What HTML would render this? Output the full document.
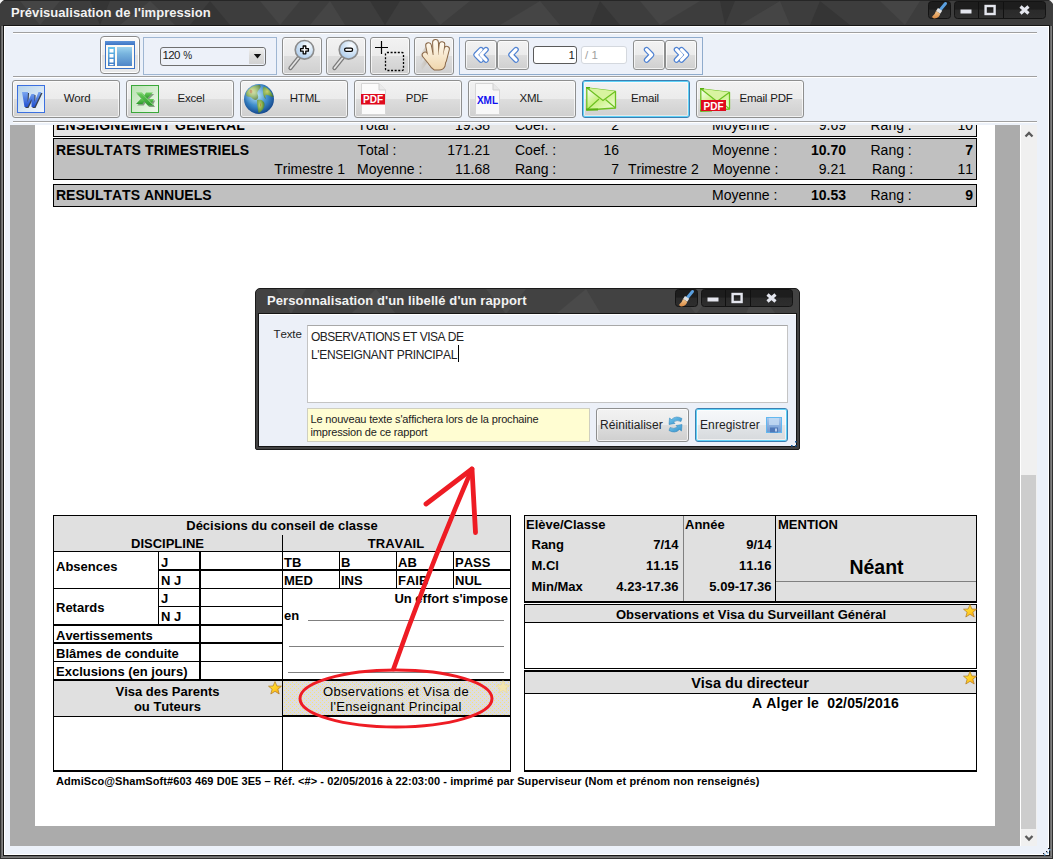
<!DOCTYPE html><html><head><meta charset="utf-8"><style>
*{margin:0;padding:0;box-sizing:border-box}
html,body{width:1053px;height:859px;overflow:hidden;background:#2e2e2e;font-family:"Liberation Sans",sans-serif}
.a{position:absolute}
.tx{white-space:pre;font-kerning:none}
.btn{position:absolute;border:1px solid #8e8f8f;border-radius:3px;background:linear-gradient(#f2f2f2 0%,#ebebeb 50%,#dddddd 51%,#cfcfcf 100%);box-shadow:inset 0 0 0 1px rgba(255,255,255,0.7)}
</style></head><body>
<div class="a" style="left:0px;top:0px;width:1053px;height:859px;background:#303030;"></div>
<svg class="a" style="left:0;top:0" width="1053" height="26">
<rect x="0" y="0" width="1053" height="26" fill="#3d3d3d"/>
<g fill="#454545">
<polygon points="20,1 60,1 40,25"/><polygon points="150,1 175,25 120,25"/><polygon points="260,1 300,1 280,25"/>
<polygon points="330,1 345,25 310,25"/><polygon points="420,1 470,1 440,25"/><polygon points="540,1 560,25 500,25"/>
<polygon points="640,1 700,1 660,25"/><polygon points="780,1 790,25 740,25"/><polygon points="880,1 920,1 905,25"/>
</g>
<g fill="#353535">
<polygon points="90,1 110,1 100,25"/><polygon points="210,1 230,25 190,25"/><polygon points="370,1 400,1 385,25"/>
<polygon points="600,1 620,25 590,25"/><polygon points="720,1 735,1 725,25"/><polygon points="820,1 850,25 810,25"/>
</g>
<rect x="0" y="0" width="1053" height="1" fill="#262626"/>
</svg>
<svg class="a" style="left:0;top:0" width="1053" height="6"><path d="M0,0 L4,0 L2.5,1 L1,2.5 L0,4 Z" fill="#f4f4f4"/><path d="M1053,0 L1049,0 L1050.5,1 L1052,2.5 L1053,4 Z" fill="#f4f4f4"/></svg>
<div class="a tx" style="font-size:13px;line-height:13px;color:#f2f2f2;font-weight:bold;letter-spacing:0.05px;left:11px;top:6.00px;">Prévisualisation de l&#x27;impression</div>
<svg class="a" style="left:928px;top:1px" width="120" height="19">
<defs><linearGradient id="tbg928" x1="0" y1="0" x2="0" y2="1"><stop offset="0" stop-color="#1d1d1d"/><stop offset="0.45" stop-color="#1d1d1d"/><stop offset="0.5" stop-color="#2a2a2a"/><stop offset="1" stop-color="#2e2e2e"/></linearGradient>
<linearGradient id="brg928" x1="0" y1="0" x2="0" y2="1"><stop offset="0" stop-color="#f4c890"/><stop offset="1" stop-color="#d88840"/></linearGradient></defs>
<rect x="0.5" y="0.5" width="22" height="17" rx="3" fill="url(#tbg928)" stroke="#141414"/>
<rect x="26.5" y="0.5" width="91" height="17" rx="3" fill="url(#tbg928)" stroke="#141414"/>
<line x1="50.5" y1="1" x2="50.5" y2="17" stroke="#111"/>
<line x1="75.5" y1="1" x2="75.5" y2="17" stroke="#111"/>
<line x1="17.5" y1="2.5" x2="12.5" y2="8.5" stroke="#5aa0e0" stroke-width="3" stroke-linecap="round"/>
<path d="M10,7 L14.2,9.8 L12.2,12.8 L8,10 Z" fill="#e0e0e0"/>
<path d="M8,10 L12.2,12.8 Q11.5,17 6.5,17.5 Q4,17.5 4.2,15.5 Q7,13.5 8,10 Z" fill="url(#brg928)"/>
<rect x="32.5" y="8.5" width="11" height="4" fill="#e4e6ee"/>
<rect x="57.6" y="5" width="9" height="8" fill="none" stroke="#e4e6ee" stroke-width="2.4"/>
<path d="M92.5,5.5 L100.5,12.5 M100.5,5.5 L92.5,12.5" stroke="#e4e6ee" stroke-width="3.2"/>
</svg>
<div class="a" style="left:1px;top:26px;width:2px;height:832px;background:#6a6a6a;"></div>
<div class="a" style="left:2px;top:26px;width:1px;height:832px;background:#808080;"></div>
<div class="a" style="left:1050px;top:26px;width:2px;height:832px;background:#6a6a6a;"></div>
<div class="a" style="left:1051px;top:26px;width:1px;height:832px;background:#808080;"></div>
<div class="a" style="left:1px;top:856px;width:1051px;height:2px;background:#6a6a6a;"></div>
<div class="a" style="left:1px;top:857px;width:1051px;height:1px;background:#7a7a7a;"></div>
<div class="a" style="left:3px;top:25px;width:1047px;height:831px;background:#151515;"></div>
<div class="a" style="left:4px;top:26px;width:1045px;height:829px;background:#ffffff;"></div>
<div class="a" style="left:5px;top:27px;width:1043px;height:827px;background:#ecf1f9;"></div>
<svg class="a" style="left:1040px;top:845px" width="12" height="12">
<g fill="#7ab0e0"><rect x="9" y="4" width="1.5" height="1.5"/><rect x="7" y="7" width="1.5" height="1.5"/><rect x="4" y="9" width="1.5" height="1.5"/></g>
<g fill="#101828"><rect x="8" y="3" width="1.2" height="1.2"/><rect x="6" y="6" width="1.2" height="1.2"/><rect x="3" y="8" width="1.2" height="1.2"/></g>
</svg>
<div class="a" style="left:13px;top:32px;width:1024px;height:1px;background:#a0a0a0;"></div>
<div class="a" style="left:13px;top:33px;width:1024px;height:1px;background:#ffffff;"></div>
<div class="a" style="left:13px;top:76px;width:1024px;height:1px;background:#a0a0a0;"></div>
<div class="a" style="left:13px;top:77px;width:1024px;height:1px;background:#ffffff;"></div>
<div class="a" style="left:13px;top:121px;width:1024px;height:1px;background:#a0a0a0;"></div>
<div class="a" style="left:13px;top:122px;width:1024px;height:1px;background:#ffffff;"></div>
<div class="a" style="left:10px;top:125px;width:1010px;height:721px;background:#ababab;"></div>
<div class="a" style="left:35px;top:125px;width:960px;height:701px;background:#ffffff;"></div>
<div class="a" style="left:1020px;top:125px;width:1px;height:721px;background:#ffffff;"></div>
<div class="a" style="left:1021px;top:125px;width:16px;height:721px;background:#f0f0f0;"></div>
<div class="a" style="left:1021px;top:475px;width:15px;height:354px;background:#cdcdcd;"></div>
<svg class="a" style="left:1021px;top:125px" width="16" height="721">
<path d="M4.5,11.5 L8,8 L11.5,11.5" fill="none" stroke="#5a5a5a" stroke-width="2.3"/>
<path d="M4.5,711 L8,714.5 L11.5,711" fill="none" stroke="#5a5a5a" stroke-width="2.3"/>
</svg>
<div class="a" style="left:35px;top:125px;width:960px;height:701px;overflow:hidden"><div class="a" style="left:-35px;top:-125px;width:1053px;height:859px">
<div class="a" style="left:53px;top:100px;width:924px;height:37px;background:#e4e4e4;border:1px solid #000;"></div>
<div class="a tx" style="font-size:14px;line-height:14px;color:#000;font-weight:bold;letter-spacing:0.24px;left:56px;top:118.15px;">ENSEIGNEMENT GENERAL</div>
<div class="a tx" style="font-size:14px;line-height:14px;color:#000;left:357.5px;top:118.15px;">Total :</div>
<div class="a tx" style="font-size:14px;line-height:14px;color:#000;left:-110px;width:600px;text-align:right;top:118.15px;">19.38</div>
<div class="a tx" style="font-size:14px;line-height:14px;color:#000;left:515px;top:118.15px;">Coef. :</div>
<div class="a tx" style="font-size:14px;line-height:14px;color:#000;left:19px;width:600px;text-align:right;top:118.15px;">2</div>
<div class="a tx" style="font-size:14px;line-height:14px;color:#000;left:712px;top:118.15px;">Moyenne :</div>
<div class="a tx" style="font-size:14px;line-height:14px;color:#000;left:246px;width:600px;text-align:right;top:118.15px;">9.69</div>
<div class="a tx" style="font-size:14px;line-height:14px;color:#000;left:870.5px;top:118.15px;">Rang :</div>
<div class="a tx" style="font-size:14px;line-height:14px;color:#000;left:373px;width:600px;text-align:right;top:118.15px;">10</div>
<div class="a" style="left:53px;top:138px;width:924px;height:42px;background:#c0c0c0;border:1px solid #000;"></div>
<div class="a tx" style="font-size:14px;line-height:14px;color:#000;font-weight:bold;letter-spacing:0.12px;left:56px;top:143.15px;">RESULTATS TRIMESTRIELS</div>
<div class="a tx" style="font-size:14px;line-height:14px;color:#000;left:357.5px;top:143.15px;">Total :</div>
<div class="a tx" style="font-size:14px;line-height:14px;color:#000;left:-110px;width:600px;text-align:right;top:143.15px;">171.21</div>
<div class="a tx" style="font-size:14px;line-height:14px;color:#000;left:515px;top:143.15px;">Coef. :</div>
<div class="a tx" style="font-size:14px;line-height:14px;color:#000;left:19px;width:600px;text-align:right;top:143.15px;">16</div>
<div class="a tx" style="font-size:14px;line-height:14px;color:#000;left:712px;top:143.15px;">Moyenne :</div>
<div class="a tx" style="font-size:14px;line-height:14px;color:#000;font-weight:bold;left:246px;width:600px;text-align:right;top:143.15px;">10.70</div>
<div class="a tx" style="font-size:14px;line-height:14px;color:#000;left:870.5px;top:143.15px;">Rang :</div>
<div class="a tx" style="font-size:14px;line-height:14px;color:#000;font-weight:bold;left:373px;width:600px;text-align:right;top:143.15px;">7</div>
<div class="a tx" style="font-size:14px;line-height:14px;color:#000;left:-255px;width:600px;text-align:right;top:161.65px;">Trimestre 1</div>
<div class="a tx" style="font-size:14px;line-height:14px;color:#000;left:357px;top:161.65px;">Moyenne :</div>
<div class="a tx" style="font-size:14px;line-height:14px;color:#000;left:-110px;width:600px;text-align:right;top:161.65px;">11.68</div>
<div class="a tx" style="font-size:14px;line-height:14px;color:#000;left:515px;top:161.65px;">Rang :</div>
<div class="a tx" style="font-size:14px;line-height:14px;color:#000;left:19px;width:600px;text-align:right;top:161.65px;">7</div>
<div class="a tx" style="font-size:14px;line-height:14px;color:#000;left:628px;top:161.65px;">Trimestre 2</div>
<div class="a tx" style="font-size:14px;line-height:14px;color:#000;left:713px;top:161.65px;">Moyenne :</div>
<div class="a tx" style="font-size:14px;line-height:14px;color:#000;left:246px;width:600px;text-align:right;top:161.65px;">9.21</div>
<div class="a tx" style="font-size:14px;line-height:14px;color:#000;left:872px;top:161.65px;">Rang :</div>
<div class="a tx" style="font-size:14px;line-height:14px;color:#000;left:373px;width:600px;text-align:right;top:161.65px;">11</div>
<div class="a" style="left:53px;top:184px;width:924px;height:23px;background:#c0c0c0;border:1px solid #000;"></div>
<div class="a tx" style="font-size:14px;line-height:14px;color:#000;font-weight:bold;left:56px;top:188.15px;">RESULTATS ANNUELS</div>
<div class="a tx" style="font-size:14px;line-height:14px;color:#000;left:712px;top:188.15px;">Moyenne :</div>
<div class="a tx" style="font-size:14px;line-height:14px;color:#000;font-weight:bold;left:246px;width:600px;text-align:right;top:188.15px;">10.53</div>
<div class="a tx" style="font-size:14px;line-height:14px;color:#000;left:870.5px;top:188.15px;">Rang :</div>
<div class="a tx" style="font-size:14px;line-height:14px;color:#000;font-weight:bold;left:373px;width:600px;text-align:right;top:188.15px;">9</div>
<div class="a" style="left:54px;top:516px;width:456px;height:35px;background:#e0e0e0;"></div>
<div class="a" style="left:54px;top:681px;width:228px;height:35px;background:#e0e0e0;"></div>
<svg class="a" style="left:283px;top:681px" width="227" height="34"><defs><pattern id="dp" width="4" height="4" patternUnits="userSpaceOnUse"><rect width="4" height="4" fill="#dddde0"/><rect x="1" y="1" width="1" height="1" fill="#f7e47c"/><rect x="3" y="3" width="1" height="1" fill="#f7e47c"/></pattern></defs><rect width="227" height="34" fill="url(#dp)"/></svg>
<div class="a" style="left:53px;top:515px;width:458px;height:1px;background:#000;"></div>
<div class="a" style="left:53px;top:515px;width:1px;height:257px;background:#000;"></div>
<div class="a" style="left:510px;top:515px;width:1px;height:257px;background:#000;"></div>
<div class="a" style="left:53px;top:770px;width:458px;height:2px;background:#000;"></div>
<div class="a" style="left:53px;top:551px;width:458px;height:1px;background:#000;"></div>
<div class="a" style="left:282px;top:535px;width:1px;height:235px;background:#000;"></div>
<div class="a" style="left:158px;top:569px;width:352px;height:2px;background:#000;"></div>
<div class="a" style="left:53px;top:588px;width:458px;height:1px;background:#000;"></div>
<div class="a" style="left:158px;top:606px;width:124px;height:1px;background:#000;"></div>
<div class="a" style="left:53px;top:624px;width:229px;height:2px;background:#000;"></div>
<div class="a" style="left:53px;top:642px;width:229px;height:2px;background:#000;"></div>
<div class="a" style="left:53px;top:661px;width:229px;height:1px;background:#000;"></div>
<div class="a" style="left:53px;top:679px;width:458px;height:2px;background:#000;"></div>
<div class="a" style="left:53px;top:716px;width:229px;height:1px;background:#000;"></div>
<div class="a" style="left:282px;top:715px;width:229px;height:2px;background:#000;"></div>
<div class="a" style="left:158px;top:551px;width:1px;height:74px;background:#000;"></div>
<div class="a" style="left:199px;top:551px;width:2px;height:129px;background:#000;"></div>
<div class="a" style="left:339px;top:551px;width:1px;height:38px;background:#000;"></div>
<div class="a" style="left:396px;top:551px;width:1px;height:38px;background:#000;"></div>
<div class="a" style="left:453px;top:551px;width:1px;height:38px;background:#000;"></div>
<div class="a" style="left:308px;top:620px;width:196px;height:1px;background:#808080;"></div>
<div class="a" style="left:289px;top:646px;width:215px;height:1px;background:#808080;"></div>
<div class="a" style="left:288px;top:672px;width:216px;height:1px;background:#808080;"></div>
<div class="a tx" style="font-size:13px;line-height:13px;color:#000;font-weight:bold;left:-18px;width:600px;text-align:center;top:519.00px;">Décisions du conseil de classe</div>
<div class="a tx" style="font-size:13px;line-height:13px;color:#000;font-weight:bold;left:-132.5px;width:600px;text-align:center;top:537.00px;">DISCIPLINE</div>
<div class="a tx" style="font-size:13px;line-height:13px;color:#000;font-weight:bold;left:96px;width:600px;text-align:center;top:537.00px;">TRAVAIL</div>
<div class="a tx" style="font-size:13px;line-height:13px;color:#000;font-weight:bold;left:56px;top:560.00px;">Absences</div>
<div class="a tx" style="font-size:13px;line-height:13px;color:#000;font-weight:bold;left:161px;top:556.00px;">J</div>
<div class="a tx" style="font-size:13px;line-height:13px;color:#000;font-weight:bold;left:161px;top:574.00px;">N J</div>
<div class="a tx" style="font-size:13px;line-height:13px;color:#000;font-weight:bold;left:56px;top:601.00px;">Retards</div>
<div class="a tx" style="font-size:13px;line-height:13px;color:#000;font-weight:bold;left:161px;top:592.00px;">J</div>
<div class="a tx" style="font-size:13px;line-height:13px;color:#000;font-weight:bold;left:161px;top:610.00px;">N J</div>
<div class="a tx" style="font-size:13px;line-height:13px;color:#000;font-weight:bold;left:56px;top:628.50px;">Avertissements</div>
<div class="a tx" style="font-size:13px;line-height:13px;color:#000;font-weight:bold;left:56px;top:647.00px;">Blâmes de conduite</div>
<div class="a tx" style="font-size:13px;line-height:13px;color:#000;font-weight:bold;left:56px;top:665.00px;">Exclusions (en jours)</div>
<div class="a tx" style="font-size:13px;line-height:13px;color:#000;font-weight:bold;left:284px;top:556.00px;">TB</div>
<div class="a tx" style="font-size:13px;line-height:13px;color:#000;font-weight:bold;left:341px;top:556.00px;">B</div>
<div class="a tx" style="font-size:13px;line-height:13px;color:#000;font-weight:bold;left:398px;top:556.00px;">AB</div>
<div class="a tx" style="font-size:13px;line-height:13px;color:#000;font-weight:bold;left:455px;top:556.00px;">PASS</div>
<div class="a tx" style="font-size:13px;line-height:13px;color:#000;font-weight:bold;left:284px;top:574.00px;">MED</div>
<div class="a tx" style="font-size:13px;line-height:13px;color:#000;font-weight:bold;left:341px;top:574.00px;">INS</div>
<div class="a tx" style="font-size:13px;line-height:13px;color:#000;font-weight:bold;left:398px;top:574.00px;">FAIB</div>
<div class="a tx" style="font-size:13px;line-height:13px;color:#000;font-weight:bold;left:455px;top:574.00px;">NUL</div>
<div class="a tx" style="font-size:13px;line-height:13px;color:#000;font-weight:bold;left:-92px;width:600px;text-align:right;top:592.00px;">Un effort s&#x27;impose</div>
<div class="a tx" style="font-size:13px;line-height:13px;color:#000;font-weight:bold;left:284px;top:609.00px;">en</div>
<div class="a tx" style="font-size:13px;line-height:13px;color:#000;font-weight:bold;left:-132.5px;width:600px;text-align:center;top:684.50px;">Visa des Parents</div>
<div class="a tx" style="font-size:13px;line-height:13px;color:#000;font-weight:bold;left:-132.5px;width:600px;text-align:center;top:699.50px;">ou Tuteurs</div>
<div class="a tx" style="font-size:13px;line-height:13px;color:#000;letter-spacing:0.35px;left:96px;width:600px;text-align:center;top:684.50px;">Observations et Visa de</div>
<div class="a tx" style="font-size:13px;line-height:13px;color:#000;letter-spacing:0.35px;left:96px;width:600px;text-align:center;top:699.50px;">l&#x27;Enseignant Principal</div>
<svg class="a" style="left:268px;top:681px" width="14" height="15"><defs><linearGradient id="sg268681" x1="0" y1="0" x2="1" y2="1"><stop offset="0" stop-color="#fff040"/><stop offset="0.6" stop-color="#ffc820"/><stop offset="1" stop-color="#f09010"/></linearGradient></defs><path d="M7,0.6 L8.9,5 L13.5,5.2 L9.9,8.2 L11.2,13 L7,10.3 L2.8,13 L4.1,8.2 L0.5,5.2 L5.1,5 Z" fill="url(#sg268681)" stroke="#b07820" stroke-width="0.7"/></svg>
<svg class="a" style="left:496px;top:680px" width="14" height="15"><path d="M7,0.6 L8.9,5 L13.5,5.2 L9.9,8.2 L11.2,13 L7,10.3 L2.8,13 L4.1,8.2 L0.5,5.2 L5.1,5 Z" fill="#f3e6b0" stroke="#e6d8a0" stroke-width="0.7"/></svg>
<div class="a" style="left:525px;top:516px;width:451px;height:85px;background:#e0e0e0;"></div>
<div class="a" style="left:524px;top:515px;width:453px;height:1px;background:#000;"></div>
<div class="a" style="left:524px;top:515px;width:1px;height:88px;background:#000;"></div>
<div class="a" style="left:976px;top:515px;width:1px;height:88px;background:#000;"></div>
<div class="a" style="left:524px;top:601px;width:453px;height:2px;background:#000;"></div>
<div class="a" style="left:683px;top:516px;width:1px;height:85px;background:#808080;"></div>
<div class="a" style="left:775px;top:516px;width:1px;height:85px;background:#000;"></div>
<div class="a" style="left:776px;top:581px;width:200px;height:1px;background:#808080;"></div>
<div class="a tx" style="font-size:13px;line-height:13px;color:#000;font-weight:bold;left:526px;top:517.50px;">Elève/Classe</div>
<div class="a tx" style="font-size:13px;line-height:13px;color:#000;font-weight:bold;left:685px;top:517.50px;">Année</div>
<div class="a tx" style="font-size:13px;line-height:13px;color:#000;font-weight:bold;left:778px;top:517.50px;">MENTION</div>
<div class="a tx" style="font-size:13px;line-height:13px;color:#000;font-weight:bold;left:531.5px;top:538.00px;">Rang</div>
<div class="a tx" style="font-size:13px;line-height:13px;color:#000;font-weight:bold;left:531.5px;top:558.50px;">M.Cl</div>
<div class="a tx" style="font-size:13px;line-height:13px;color:#000;font-weight:bold;left:531.5px;top:580.00px;">Min/Max</div>
<div class="a tx" style="font-size:13px;line-height:13px;color:#000;font-weight:bold;left:78.5px;width:600px;text-align:right;top:538.00px;">7/14</div>
<div class="a tx" style="font-size:13px;line-height:13px;color:#000;font-weight:bold;left:171.5px;width:600px;text-align:right;top:538.00px;">9/14</div>
<div class="a tx" style="font-size:13px;line-height:13px;color:#000;font-weight:bold;left:78.5px;width:600px;text-align:right;top:558.50px;">11.15</div>
<div class="a tx" style="font-size:13px;line-height:13px;color:#000;font-weight:bold;left:171.5px;width:600px;text-align:right;top:558.50px;">11.16</div>
<div class="a tx" style="font-size:13px;line-height:13px;color:#000;font-weight:bold;left:78.5px;width:600px;text-align:right;top:580.00px;">4.23-17.36</div>
<div class="a tx" style="font-size:13px;line-height:13px;color:#000;font-weight:bold;left:171.5px;width:600px;text-align:right;top:580.00px;">5.09-17.36</div>
<div class="a tx" style="font-size:19.5px;line-height:19.5px;color:#000;font-weight:bold;left:576.5px;width:600px;text-align:center;top:557.99px;">Néant</div>
<div class="a" style="left:525px;top:605px;width:451px;height:17px;background:#e0e0e0;"></div>
<div class="a" style="left:524px;top:604px;width:453px;height:65px;background:transparent;border:1px solid #000;"></div>
<div class="a" style="left:524px;top:622px;width:453px;height:1px;background:#000;"></div>
<div class="a tx" style="font-size:13px;line-height:13px;color:#000;font-weight:bold;left:451px;width:600px;text-align:center;top:608.00px;">Observations et Visa du Surveillant Général</div>
<svg class="a" style="left:963px;top:604px" width="14" height="15"><defs><linearGradient id="sg963604" x1="0" y1="0" x2="1" y2="1"><stop offset="0" stop-color="#fff040"/><stop offset="0.6" stop-color="#ffc820"/><stop offset="1" stop-color="#f09010"/></linearGradient></defs><path d="M7,0.6 L8.9,5 L13.5,5.2 L9.9,8.2 L11.2,13 L7,10.3 L2.8,13 L4.1,8.2 L0.5,5.2 L5.1,5 Z" fill="url(#sg963604)" stroke="#b07820" stroke-width="0.7"/></svg>
<div class="a" style="left:525px;top:672px;width:451px;height:21px;background:#e0e0e0;"></div>
<div class="a" style="left:524px;top:670px;width:453px;height:102px;background:transparent;border:1px solid #000;"></div>
<div class="a" style="left:524px;top:670px;width:453px;height:2px;background:#000;"></div>
<div class="a" style="left:524px;top:770px;width:453px;height:2px;background:#000;"></div>
<div class="a" style="left:524px;top:693px;width:453px;height:1px;background:#000;"></div>
<div class="a tx" style="font-size:14.5px;line-height:14.5px;color:#000;font-weight:bold;left:450px;width:600px;text-align:center;top:675.73px;">Visa du directeur</div>
<div class="a tx" style="font-size:14px;line-height:14px;color:#000;font-weight:bold;letter-spacing:0.17px;left:752px;top:695.65px;">A Alger le  02/05/2016</div>
<svg class="a" style="left:963px;top:671px" width="14" height="15"><defs><linearGradient id="sg963671" x1="0" y1="0" x2="1" y2="1"><stop offset="0" stop-color="#fff040"/><stop offset="0.6" stop-color="#ffc820"/><stop offset="1" stop-color="#f09010"/></linearGradient></defs><path d="M7,0.6 L8.9,5 L13.5,5.2 L9.9,8.2 L11.2,13 L7,10.3 L2.8,13 L4.1,8.2 L0.5,5.2 L5.1,5 Z" fill="url(#sg963671)" stroke="#b07820" stroke-width="0.7"/></svg>
<div class="a tx" style="font-size:11px;line-height:11px;color:#000;font-weight:bold;letter-spacing:0.08px;left:56px;top:775.69px;">AdmiSco@ShamSoft#603 469 D0E 3E5 – Réf. &lt;#&gt; - 02/05/2016 à 22:03:00 - imprimé par Superviseur (Nom et prénom non renseignés)</div>
<svg class="a" style="left:0;top:0" width="1053" height="859">
<ellipse cx="396" cy="698.5" rx="96" ry="28.5" fill="none" stroke="#ee1c24" stroke-width="3"/>
<path d="M393.5,669 Q428.5,570 472,469" fill="none" stroke="#ee1c24" stroke-width="4.6" stroke-linecap="round"/>
<path d="M426,504 L472,469 L475.5,532.5" fill="none" stroke="#ee1c24" stroke-width="4.8" stroke-linecap="round" stroke-linejoin="round"/>
</svg>
</div></div>
<div class="a" style="left:100px;top:36px;width:40px;height:38px;border:1px solid #8a8a8a;border-radius:4px;background:linear-gradient(#fafafa,#ececec 50%,#e2e2e2 51%,#eaeaea);box-shadow:inset 0 0 0 1px #fff"></div>
<svg class="a" style="left:104px;top:40px" width="32" height="30">
<defs>
<linearGradient id="lg1" x1="0" y1="0" x2="0" y2="1"><stop offset="0" stop-color="#5d93d8"/><stop offset="1" stop-color="#3c74c4"/></linearGradient>
<linearGradient id="lg2" x1="0" y1="0" x2="0" y2="1"><stop offset="0" stop-color="#9ed4f0"/><stop offset="0.35" stop-color="#78b4de"/><stop offset="1" stop-color="#4f86c8"/></linearGradient>
<linearGradient id="lg3" x1="0" y1="0" x2="0" y2="1"><stop offset="0" stop-color="#6cc6ee"/><stop offset="1" stop-color="#3e78c4"/></linearGradient>
</defs>
<rect x="1" y="1" width="30" height="28" fill="#fdfaf4"/>
<rect x="1.5" y="1.5" width="29" height="27" fill="none" stroke="#3d74c6" stroke-width="1"/>
<rect x="1" y="1" width="30" height="4" fill="url(#lg1)"/>
<rect x="4" y="7" width="7" height="19" fill="url(#lg3)"/>
<rect x="5.5" y="9" width="4" height="3.5" fill="#fff"/>
<rect x="5.5" y="14" width="4" height="3.5" fill="#fff"/>
<rect x="5.5" y="19" width="4" height="3.5" fill="#fff"/>
<rect x="5.5" y="24" width="4" height="1.2" fill="#fff"/>
<rect x="13" y="7" width="15" height="19" fill="url(#lg2)"/>
</svg>
<div class="a" style="left:143px;top:37px;width:134px;height:38px;border:1px solid #9fb6d2;background:#edf1f9"></div>
<div class="a" style="left:160px;top:47px;width:106px;height:19px;border:1px solid #6f6f6f;border-radius:3px;background:#edf1f9"></div>
<div class="a" style="left:249px;top:48px;width:15px;height:16px;background:linear-gradient(#f2f2f2,#dcdcdc 50%,#d2d2d2)"></div>
<svg class="a" style="left:249px;top:48px" width="15" height="16"><path d="M4.8,6 L12.2,6 L8.5,10.5 Z" fill="#111"/></svg>
<div class="a tx" style="font-size:11.5px;line-height:11.5px;color:#1a1a1a;letter-spacing:-0.6px;left:162.5px;top:49.77px;">120</div>
<div class="a tx" style="font-size:10px;line-height:10px;color:#1a1a1a;left:183.2px;top:51.03px;">%</div>
<div class="btn" style="left:282px;top:37px;width:40px;height:38px;"></div>
<div class="btn" style="left:326px;top:37px;width:40px;height:38px;"></div>
<div class="btn" style="left:370px;top:37px;width:40px;height:38px;"></div>
<div class="btn" style="left:414px;top:37px;width:40px;height:38px;"></div>
<svg class="a" style="left:283px;top:37px" width="36" height="38">
<defs><radialGradient id="mg283" cx="0.65" cy="0.3" r="0.8"><stop offset="0" stop-color="#ffffff"/><stop offset="0.35" stop-color="#dcebf8"/><stop offset="1" stop-color="#a8c8ea"/></radialGradient></defs>
<line x1="7.5" y1="31" x2="15.5" y2="21" stroke="#7a7a7a" stroke-width="4.4" stroke-linecap="round"/>
<line x1="7.5" y1="31" x2="15.5" y2="21" stroke="#e4e4e4" stroke-width="1.8" stroke-linecap="round"/>
<circle cx="21.5" cy="12.8" r="9.3" fill="url(#mg283)" stroke="#8c8c8c" stroke-width="1.6"/>
<path d="M20.2,9 h2.6 v2.6 h2.6 v2.6 h-2.6 v2.6 h-2.6 v-2.6 h-2.6 v-2.6 h2.6 z" fill="#fff" stroke="#000" stroke-width="1.3" stroke-linejoin="round"/>
</svg>
<svg class="a" style="left:327px;top:37px" width="36" height="38">
<defs><radialGradient id="mg327" cx="0.65" cy="0.3" r="0.8"><stop offset="0" stop-color="#ffffff"/><stop offset="0.35" stop-color="#dcebf8"/><stop offset="1" stop-color="#a8c8ea"/></radialGradient></defs>
<line x1="7.5" y1="31" x2="15.5" y2="21" stroke="#7a7a7a" stroke-width="4.4" stroke-linecap="round"/>
<line x1="7.5" y1="31" x2="15.5" y2="21" stroke="#e4e4e4" stroke-width="1.8" stroke-linecap="round"/>
<circle cx="21.5" cy="12.8" r="9.3" fill="url(#mg327)" stroke="#8c8c8c" stroke-width="1.6"/>
<rect x="17.6" y="11.2" width="8" height="3.2" rx="1.6" fill="#fff" stroke="#000" stroke-width="1.3"/>
</svg>
<svg class="a" style="left:370px;top:37px" width="40" height="38">
<path d="M11.5,4 V17 M5,10.5 H18" stroke="#000" stroke-width="1.2"/>
<rect x="15.5" y="15.5" width="18" height="18" rx="1.5" fill="none" stroke="#000" stroke-width="1.3" stroke-dasharray="2,1.6"/>
</svg>
<svg class="a" style="left:414px;top:37px" width="40" height="38">
<defs><linearGradient id="hg" gradientUnits="userSpaceOnUse" x1="0" y1="4" x2="0" y2="33"><stop offset="0" stop-color="#fffbf2"/><stop offset="1" stop-color="#f0d6ac"/></linearGradient>
<linearGradient id="mlg" x1="0" y1="0" x2="1" y2="0"><stop offset="0" stop-color="#c0b8ac" stop-opacity="0"/><stop offset="1" stop-color="#c0b8ac" stop-opacity="0.9"/></linearGradient></defs>
<path d="M5,19 L12,9 L14,13 L7,24 Z" fill="url(#mlg)"/>
<path d="M6,29 L13,19 L15,23 L8,33 Z" fill="url(#mlg)"/>
<g><line x1="14.5" y1="8.5" x2="17" y2="21" stroke="#8a6848" stroke-width="6.6" stroke-linecap="round"/><line x1="21.5" y1="5.5" x2="22" y2="19" stroke="#8a6848" stroke-width="6.8" stroke-linecap="round"/><line x1="28" y1="7.5" x2="26.5" y2="20" stroke="#8a6848" stroke-width="6.6" stroke-linecap="round"/><line x1="32.8" y1="12" x2="30" y2="23" stroke="#8a6848" stroke-width="6.2" stroke-linecap="round"/><line x1="11" y1="18" x2="17.5" y2="26" stroke="#8a6848" stroke-width="6.6" stroke-linecap="round"/><path d="M15,18 L32.5,18 L30.5,29 Q29,32.5 25,32.5 L20.5,32.5 Q17.5,31 15.5,27 Z" fill="#8a6848" stroke="#8a6848" stroke-width="2.01" stroke-linejoin="round"/></g>
<g><line x1="14.5" y1="8.5" x2="17" y2="21" stroke="url(#hg)" stroke-width="4.6" stroke-linecap="round"/><line x1="21.5" y1="5.5" x2="22" y2="19" stroke="url(#hg)" stroke-width="4.8" stroke-linecap="round"/><line x1="28" y1="7.5" x2="26.5" y2="20" stroke="url(#hg)" stroke-width="4.6" stroke-linecap="round"/><line x1="32.8" y1="12" x2="30" y2="23" stroke="url(#hg)" stroke-width="4.2" stroke-linecap="round"/><line x1="11" y1="18" x2="17.5" y2="26" stroke="url(#hg)" stroke-width="4.6" stroke-linecap="round"/><path d="M15,18 L32.5,18 L30.5,29 Q29,32.5 25,32.5 L20.5,32.5 Q17.5,31 15.5,27 Z" fill="url(#hg)" stroke="url(#hg)" stroke-width="0.01" stroke-linejoin="round"/></g>
</svg>
<div class="a" style="left:459px;top:37px;width:244px;height:38px;border:1px solid #8fabcc;background:#edf1f9"></div>
<div class="btn" style="left:465px;top:40px;width:32px;height:30px;"></div>
<div class="btn" style="left:497px;top:40px;width:32px;height:30px;"></div>
<div class="btn" style="left:633px;top:40px;width:32px;height:30px;"></div>
<div class="btn" style="left:665px;top:40px;width:32px;height:30px;"></div>
<svg class="a" style="left:465px;top:40px" width="232" height="30">
<g fill="none" stroke="#4f82d2" stroke-width="5.6" stroke-linecap="round" stroke-linejoin="round"><path d="M16,9.600000000000001 L11,14.8 L16,20.0"/><path d="M21,9.600000000000001 L16,14.8 L21,20.0"/><path d="M51,9.600000000000001 L46,14.8 L51,20.0"/><path d="M181.6,9.600000000000001 L186.6,14.8 L181.6,20.0"/><path d="M211.5,9.600000000000001 L216.5,14.8 L211.5,20.0"/><path d="M216.5,9.600000000000001 L221.5,14.8 L216.5,20.0"/></g>
<g fill="none" stroke="#fff" stroke-width="3.2" stroke-linecap="round" stroke-linejoin="round"><path d="M16,9.600000000000001 L11,14.8 L16,20.0"/><path d="M21,9.600000000000001 L16,14.8 L21,20.0"/><path d="M51,9.600000000000001 L46,14.8 L51,20.0"/><path d="M181.6,9.600000000000001 L186.6,14.8 L181.6,20.0"/><path d="M211.5,9.600000000000001 L216.5,14.8 L211.5,20.0"/><path d="M216.5,9.600000000000001 L221.5,14.8 L216.5,20.0"/></g>
</svg>
<div class="a" style="left:533px;top:46px;width:44px;height:18px;border:1px solid #5a5a5a;border-radius:3px;background:#fff"></div>
<div class="a tx" style="font-size:11.5px;line-height:11.5px;color:#222;left:-25px;width:600px;text-align:right;top:50.27px;">1</div>
<div class="a" style="left:581px;top:46px;width:46px;height:18px;border:1px solid #d4d8de;border-radius:3px;background:#fff"></div>
<div class="a tx" style="font-size:11.5px;line-height:11.5px;color:#a0a0a0;left:585px;top:50.27px;">/ 1</div>
<div class="btn" style="left:12px;top:80px;width:108px;height:38px;"></div>
<div class="btn" style="left:126px;top:80px;width:108px;height:38px;"></div>
<div class="btn" style="left:240px;top:80px;width:108px;height:38px;"></div>
<div class="btn" style="left:354px;top:80px;width:108px;height:38px;"></div>
<div class="btn" style="left:468px;top:80px;width:108px;height:38px;"></div>
<div class="a" style="left:582px;top:80px;width:108px;height:38px;border:1px solid #3c7fb1;border-radius:3px;background:linear-gradient(#f2f2f2 0%,#ebebeb 50%,#dddddd 51%,#cfcfcf 100%);box-shadow:inset 0 0 0 1px #5fd2f8,inset 0 0 0 2px rgba(255,255,255,0.5)"></div>
<div class="btn" style="left:696px;top:80px;width:108px;height:38px;"></div>
<div class="a tx" style="font-size:11.5px;line-height:11.5px;color:#1a1a1a;letter-spacing:-0.2px;left:-223px;width:600px;text-align:center;top:93.27px;">Word</div>
<div class="a tx" style="font-size:11.5px;line-height:11.5px;color:#1a1a1a;letter-spacing:-0.2px;left:-109px;width:600px;text-align:center;top:93.27px;">Excel</div>
<div class="a tx" style="font-size:11.5px;line-height:11.5px;color:#1a1a1a;letter-spacing:-0.2px;left:5px;width:600px;text-align:center;top:93.27px;">HTML</div>
<div class="a tx" style="font-size:11.5px;line-height:11.5px;color:#1a1a1a;letter-spacing:-0.2px;left:117px;width:600px;text-align:center;top:93.27px;">PDF</div>
<div class="a tx" style="font-size:11.5px;line-height:11.5px;color:#1a1a1a;letter-spacing:-0.2px;left:231px;width:600px;text-align:center;top:93.27px;">XML</div>
<div class="a tx" style="font-size:11.5px;line-height:11.5px;color:#1a1a1a;letter-spacing:-0.2px;left:345px;width:600px;text-align:center;top:93.27px;">Email</div>
<div class="a tx" style="font-size:11.5px;line-height:11.5px;color:#1a1a1a;letter-spacing:-0.2px;left:466px;width:600px;text-align:center;top:93.27px;">Email PDF</div>
<svg class="a" style="left:17px;top:85px" width="29" height="29">
<defs><linearGradient id="wg" x1="0" y1="0" x2="1" y2="1"><stop offset="0" stop-color="#b4d2ea"/><stop offset="1" stop-color="#f4f8fc"/></linearGradient>
<linearGradient id="wl" x1="0" y1="0" x2="0" y2="1"><stop offset="0" stop-color="#7aa6f0"/><stop offset="1" stop-color="#1f4fd0"/></linearGradient></defs>
<rect x="0.5" y="0.5" width="27" height="27" fill="url(#wg)" stroke="#3b70e0" stroke-width="1"/>
<path d="M5,7 L11,7 L10.5,17 L14.5,9 L17.5,9 L17.5,17 L21.5,7 L24.5,7 L17.5,22 L14.5,22 L14.5,14 L10.5,22 L7.5,22 Z" fill="#101828" transform="translate(1,1)" opacity="0.8"/>
<path d="M5,7 L11,7 L10.5,17 L14.5,9 L17.5,9 L17.5,17 L21.5,7 L24.5,7 L17.5,22 L14.5,22 L14.5,14 L10.5,22 L7.5,22 Z" fill="url(#wl)"/>
</svg>
<svg class="a" style="left:131px;top:85px" width="29" height="29">
<defs><linearGradient id="xg" x1="0" y1="0" x2="1" y2="1"><stop offset="0" stop-color="#b8e2b0"/><stop offset="1" stop-color="#f2faf0"/></linearGradient>
<linearGradient id="xl" x1="0" y1="0" x2="0" y2="1"><stop offset="0" stop-color="#6ccf5e"/><stop offset="1" stop-color="#2a9a2a"/></linearGradient></defs>
<rect x="0.5" y="0.5" width="27" height="27" fill="url(#xg)" stroke="#3aa83a" stroke-width="1"/>
<g transform="translate(1.2,1.4)" fill="#1c3c1c" opacity="0.45">
<path d="M5,7.5 L11,7.5 L23,20.5 L17,20.5 Z"/><path d="M5,19 L10.5,13 L13.5,16 L11.5,19 Z"/><path d="M15,7.5 L22,7.5 L16,13.5 L13,11 Z"/><path d="M17,14 L23,14 L21,18 Z"/>
</g>
<g fill="url(#xl)">
<path d="M5,7.5 L11,7.5 L23,20.5 L17,20.5 Z"/><path d="M5,19 L10.5,13 L13.5,16 L11.5,19 Z"/><path d="M15,7.5 L22,7.5 L16,13.5 L13,11 Z"/><path d="M17,14 L23,14 L21,18 Z"/>
</g>
<path d="M6,8 L10.5,8 L22,20" stroke="#9fe08f" stroke-width="0.7" fill="none"/>
</svg>
<svg class="a" style="left:243px;top:83px" width="32" height="32">
<defs><radialGradient id="gg" cx="0.45" cy="0.4" r="0.65"><stop offset="0" stop-color="#8fd0ee"/><stop offset="0.55" stop-color="#3a88c8"/><stop offset="1" stop-color="#0c3a80"/></radialGradient>
<radialGradient id="gl" cx="0.4" cy="0.4" r="0.7"><stop offset="0" stop-color="#c8d070"/><stop offset="0.5" stop-color="#7aa848"/><stop offset="1" stop-color="#3e6a30"/></radialGradient>
<radialGradient id="gs" cx="0.35" cy="0.3" r="0.8"><stop offset="0" stop-color="#ffffff" stop-opacity="0.45"/><stop offset="0.5" stop-color="#ffffff" stop-opacity="0"/></radialGradient></defs>
<circle cx="16" cy="16" r="15" fill="url(#gg)"/>
<path d="M3,10 C6,4 12,1.5 17,2 C19,4 16,6 15,8 C13,11 16,12 15,15 C14,18 10,17 9,15 C7,13 5,14 3.5,13 Z" fill="url(#gl)"/>
<path d="M14,17 C18,16 22,18 21.5,22 C21,26 18,29 15.5,30 C15,27 14,22 14,17 Z" fill="url(#gl)"/>
<path d="M21,3.5 C25,5 29,9 30.5,14 C28,14 26,12 24,12 C22,11 22,14 23,16 C21,15 20,12 20,9 C20,7 19,5 21,3.5 Z" fill="url(#gl)"/>
<path d="M7,7 C9,6 10,8 9,10 C8,11 6,10 7,7 Z M17,20 C18,21 18,23 17,24 Z" fill="#b07838"/>
<circle cx="16" cy="16" r="15" fill="url(#gs)"/>
</svg>
<svg class="a" style="left:361px;top:83px" width="26" height="32">
<path d="M0.5,0.5 L18,0.5 L24.5,7 L24.5,31.5 L0.5,31.5 Z" fill="#fbfbfb" stroke="#d6d6d6"/>
<path d="M18,0.5 L18,7 L24.5,7" fill="#eaeaea" stroke="#cfcfcf"/>
<rect x="0" y="11" width="24" height="10.5" fill="#e00a1c"/>
<text x="12" y="20" font-family="Liberation Sans" font-weight="bold" font-size="10" fill="#fff" text-anchor="middle">PDF</text>
</svg>
<svg class="a" style="left:475px;top:83px" width="26" height="32">
<path d="M0.5,0.5 L18,0.5 L24.5,7 L24.5,31.5 L0.5,31.5 Z" fill="#f8f8f8" stroke="#d6d6d6"/>
<path d="M18,0.5 L18,7 L24.5,7" fill="#e8e8e8" stroke="#cfcfcf"/>
<text x="12.5" y="21" font-family="Liberation Sans" font-weight="bold" font-size="10" fill="#1010f0" text-anchor="middle">XML</text>
</svg>
<svg class="a" style="left:586px;top:87px" width="32" height="26">
<defs><linearGradient id="eg586" x1="0" y1="0" x2="1" y2="1"><stop offset="0" stop-color="#ffffff"/><stop offset="0.45" stop-color="#c8f080"/><stop offset="1" stop-color="#f4ffe0"/></linearGradient></defs>
<path d="M0.8,0.8 L29.5,4.3 L29.5,21 L0.8,23 Z" fill="url(#eg586)" stroke="#6cc020" stroke-width="1.3" stroke-linejoin="round"/>
<path d="M0.8,0.8 L17,13.5 L29.5,4.3" fill="#d8f4a0" stroke="#6cc020" stroke-width="1.2"/>
<path d="M0.8,23 L13,12 M29.5,21 L19.5,12.5" stroke="#6cc020" stroke-width="1.1"/>
<path d="M0,0 L4,0 L4,1.5 L0,1.5 Z M0,21.5 L12,21.5 L12,23.5 L0,23.5 Z" fill="#58b010"/>
</svg>
<svg class="a" style="left:700px;top:88px" width="32" height="26">
<defs><linearGradient id="eg700" x1="0" y1="0" x2="1" y2="1"><stop offset="0" stop-color="#ffffff"/><stop offset="0.45" stop-color="#c8f080"/><stop offset="1" stop-color="#f4ffe0"/></linearGradient></defs>
<path d="M0.8,0.8 L29.5,4.3 L29.5,21 L0.8,23 Z" fill="url(#eg700)" stroke="#6cc020" stroke-width="1.3" stroke-linejoin="round"/>
<path d="M0.8,0.8 L17,13.5 L29.5,4.3" fill="#d8f4a0" stroke="#6cc020" stroke-width="1.2"/>
<path d="M0.8,23 L13,12 M29.5,21 L19.5,12.5" stroke="#6cc020" stroke-width="1.1"/>
<path d="M0,0 L4,0 L4,1.5 L0,1.5 Z M0,21.5 L12,21.5 L12,23.5 L0,23.5 Z" fill="#58b010"/>
</svg>
<svg class="a" style="left:701px;top:100px" width="26" height="12">
<rect x="0" y="0" width="25" height="11" fill="#e00a1c"/>
<text x="12.5" y="9.5" font-family="Liberation Sans" font-weight="bold" font-size="10" fill="#fff" text-anchor="middle">PDF</text>
</svg>
<div class="a" style="left:255px;top:288px;width:545px;height:162px;border-radius:5px 5px 2px 2px;background:#424242;border:1px solid #1a1a1a"></div>
<svg class="a" style="left:256px;top:289px" width="543" height="25">
<g fill="#4a4a4a">
<polygon points="20,0 50,0 35,25"/><polygon points="120,0 140,25 95,25"/><polygon points="230,0 270,0 250,25"/>
<polygon points="330,0 345,25 300,25"/><polygon points="420,0 460,0 440,25"/><polygon points="500,0 520,25 490,25"/>
</g></svg>
<div class="a tx" style="font-size:13px;line-height:13px;color:#f2f2f2;font-weight:bold;letter-spacing:0.1px;left:267px;top:294.00px;">Personnalisation d&#x27;un libellé d&#x27;un rapport</div>
<svg class="a" style="left:675px;top:289px" width="120" height="19">
<defs><linearGradient id="tbg675" x1="0" y1="0" x2="0" y2="1"><stop offset="0" stop-color="#1d1d1d"/><stop offset="0.45" stop-color="#1d1d1d"/><stop offset="0.5" stop-color="#2a2a2a"/><stop offset="1" stop-color="#2e2e2e"/></linearGradient>
<linearGradient id="brg675" x1="0" y1="0" x2="0" y2="1"><stop offset="0" stop-color="#f4c890"/><stop offset="1" stop-color="#d88840"/></linearGradient></defs>
<rect x="0.5" y="0.5" width="22" height="17" rx="3" fill="url(#tbg675)" stroke="#141414"/>
<rect x="26.5" y="0.5" width="91" height="17" rx="3" fill="url(#tbg675)" stroke="#141414"/>
<line x1="50.5" y1="1" x2="50.5" y2="17" stroke="#111"/>
<line x1="75.5" y1="1" x2="75.5" y2="17" stroke="#111"/>
<line x1="17.5" y1="2.5" x2="12.5" y2="8.5" stroke="#5aa0e0" stroke-width="3" stroke-linecap="round"/>
<path d="M10,7 L14.2,9.8 L12.2,12.8 L8,10 Z" fill="#e0e0e0"/>
<path d="M8,10 L12.2,12.8 Q11.5,17 6.5,17.5 Q4,17.5 4.2,15.5 Q7,13.5 8,10 Z" fill="url(#brg675)"/>
<rect x="32.5" y="8.5" width="11" height="4" fill="#e4e6ee"/>
<rect x="57.6" y="5" width="9" height="8" fill="none" stroke="#e4e6ee" stroke-width="2.4"/>
<path d="M92.5,5.5 L100.5,12.5 M100.5,5.5 L92.5,12.5" stroke="#e4e6ee" stroke-width="3.2"/>
</svg>
<div class="a" style="left:258px;top:313px;width:539px;height:134px;background:#151515;"></div>
<div class="a" style="left:259px;top:314px;width:537px;height:132px;background:#ecf0f8;"></div>
<div class="a" style="left:259px;top:314px;width:537px;height:1px;background:#fff;"></div>
<div class="a tx" style="font-size:11.5px;line-height:11.5px;color:#222;letter-spacing:-0.1px;left:273.5px;top:328.77px;">Texte</div>
<div class="a" style="left:307px;top:325px;width:481px;height:78px;background:#fff;border:1px solid #c4c4c4;border-top-color:#a8a8a8"></div>
<div class="a tx" style="font-size:12px;line-height:12px;color:#222;letter-spacing:-0.5px;left:311px;top:330.84px;">OBSERVATIONS ET VISA DE</div>
<div class="a tx" style="font-size:12px;line-height:12px;color:#222;letter-spacing:-0.35px;left:311px;top:348.84px;">L&#x27;ENSEIGNANT PRINCIPAL</div>
<div class="a" style="left:458px;top:345px;width:1px;height:17px;background:#000;"></div>
<div class="a" style="left:307px;top:408px;width:283px;height:34px;background:#fffdd2;border:1px solid #cfcfc0"></div>
<div class="a tx" style="font-size:11px;line-height:11px;color:#222;letter-spacing:-0.17px;left:310.5px;top:413.69px;">Le nouveau texte s&#x27;affichera lors de la prochaine</div>
<div class="a tx" style="font-size:11px;line-height:11px;color:#222;letter-spacing:-0.17px;left:310.5px;top:426.99px;">impression de ce rapport</div>
<div class="btn" style="left:596px;top:408px;width:93px;height:34px;border-radius:3px"></div>
<div class="a" style="left:695px;top:408px;width:93px;height:34px;border:1px solid #3c7fb1;border-radius:3px;background:linear-gradient(#f6f8fa 0%,#eef1f4 50%,#e2e5e8 51%,#d6d9dc 100%);box-shadow:inset 0 0 0 1px #5fd2f8,inset 0 0 0 2px rgba(255,255,255,0.6)"></div>
<div class="a tx" style="font-size:12px;line-height:12px;color:#222;letter-spacing:0.05px;left:600px;top:419.34px;">Réinitialiser</div>
<div class="a tx" style="font-size:12px;line-height:12px;color:#222;letter-spacing:0.1px;left:700px;top:419.34px;">Enregistrer</div>
<svg class="a" style="left:666px;top:415px" width="18" height="20">
<defs><linearGradient id="rfg" x1="0" y1="0" x2="1" y2="1"><stop offset="0" stop-color="#7ccaf0"/><stop offset="1" stop-color="#2f8ec8"/></linearGradient></defs>
<path d="M16,3.5 Q10,0 5.5,4.5 L3.5,3 L3,9.5 L9,8.5 L7.5,7 Q11,4.5 15,6.5 Z" fill="url(#rfg)" stroke="#2a80b8" stroke-width="0.5"/>
<path d="M3,15.5 Q9,19 13.5,14.5 L15.5,16 L16,9.5 L10,10.5 L11.5,12 Q8,14.5 4,12.5 Z" fill="url(#rfg)" stroke="#2a80b8" stroke-width="0.5"/>
</svg>
<svg class="a" style="left:766px;top:417px" width="17" height="17">
<defs><linearGradient id="flg" x1="0" y1="0" x2="0" y2="1"><stop offset="0" stop-color="#a8c8ee"/><stop offset="1" stop-color="#6f98d0"/></linearGradient></defs>
<rect x="0.5" y="0.5" width="15" height="15" fill="url(#flg)" stroke="#62b8f0"/>
<rect x="3" y="1" width="10" height="7" fill="#c4dcf4" opacity="0.8"/>
<rect x="4" y="10.5" width="8" height="5" fill="#4f78b8"/>
<rect x="9" y="11.5" width="2" height="3" fill="#b8d0ee"/>
</svg>
<svg class="a" style="left:789px;top:440px" width="10" height="10">
<g fill="#2060a0"><rect x="6" y="1" width="1.6" height="1.6"/><rect x="6" y="5" width="1.6" height="1.6"/><rect x="2" y="5" width="1.6" height="1.6"/></g>
</svg>
</body></html>
